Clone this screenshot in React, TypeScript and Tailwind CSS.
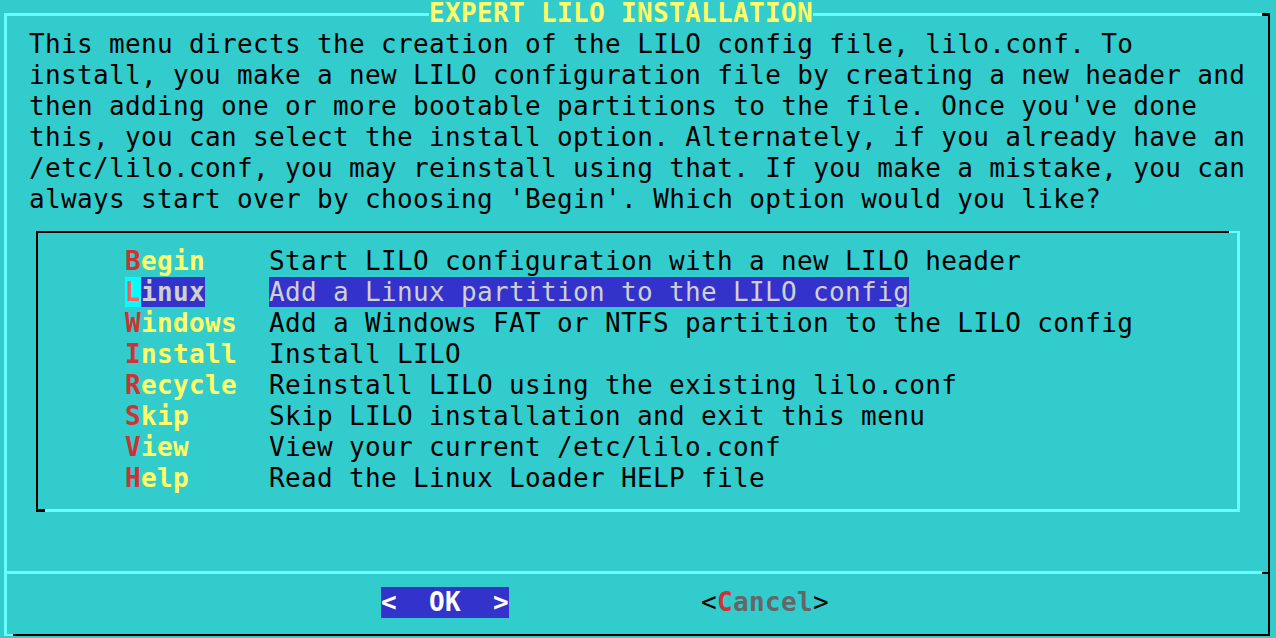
const INTRO = [
  'This menu directs the creation of the LILO config file, lilo.conf. To',
  'install, you make a new LILO configuration file by creating a new header and',
  "then adding one or more bootable partitions to the file. Once you've done",
  'this, you can select the install option. Alternately, if you already have an',
  '/etc/lilo.conf, you may reinstall using that. If you make a mistake, you can',
  "always start over by choosing 'Begin'. Which option would you like?",
];

const ITEMS = [
  { tag: 'Begin',   desc: 'Start LILO configuration with a new LILO header' },
  { tag: 'Linux',   desc: 'Add a Linux partition to the LILO config' },
  { tag: 'Windows', desc: 'Add a Windows FAT or NTFS partition to the LILO config' },
  { tag: 'Install', desc: 'Install LILO' },
  { tag: 'Recycle', desc: 'Reinstall LILO using the existing lilo.conf' },
  { tag: 'Skip',    desc: 'Skip LILO installation and exit this menu' },
  { tag: 'View',    desc: 'View your current /etc/lilo.conf' },
  { tag: 'Help',    desc: 'Read the Linux Loader HELP file' },
];

function MenuRow({ tag, desc, active }: { tag: string; desc: string; active: boolean }) {
  return (
    <div className="flex h-[31px] whitespace-pre">
      <div className="w-[144px] shrink-0 font-bold">
        {active ? (
          <>
            <span className="bg-[#00ffff] text-[#ff5f5f]">{tag[0]}</span>
            <span className="bg-[#3333cc] text-[#d0d0d0]">{tag.slice(1)}</span>
          </>
        ) : (
          <>
            <span className="text-[#cc3333]">{tag[0]}</span>
            <span className="text-[#ffff66]">{tag.slice(1)}</span>
          </>
        )}
      </div>
      <div>
        <span className={active ? 'bg-[#3333cc] text-[#d0d0d0]' : 'text-black'}>{desc}</span>
      </div>
    </div>
  );
}

export default function App() {
  const selected = 1;

  return (
    <div className="w-[1276px] h-[638px] overflow-hidden bg-[#33cccc] pt-[13px] pl-[4px] font-['DejaVu_Sans_Mono',monospace] text-[26px] tracking-[0.35px] leading-[31px] text-black">
      {/* Dialog frame */}
      <div className="relative w-[1266px] h-[623px] border-t-[3px] border-l-[3px] border-r-2 border-b-2 border-t-[#66ffff] border-l-[#66ffff] border-r-black border-b-black">
        <span className="absolute top-[-3px] right-[-2px] w-[8px] h-[3px] bg-black" />
        <span className="absolute bottom-[-2px] left-[-3px] w-[9px] h-[2px] bg-[#66ffff]" />

        {/* Title */}
        <div className="absolute left-[422px] top-[-16px] w-[384px] h-[29px] leading-[27px] bg-[#33cccc] text-[#ffff66] font-bold whitespace-pre">
          EXPERT LILO INSTALLATION
        </div>

        {/* Prompt */}
        <div className="pl-[22px] pt-[13px]">
          {INTRO.map((line) => (
            <div key={line} className="h-[31px] whitespace-pre">{line}</div>
          ))}
        </div>

        {/* Menu box */}
        <div className="relative ml-[29px] mt-[16px] w-[1204px] h-[281px] border-t-2 border-l-2 border-r-[3px] border-b-[3px] border-t-black border-l-black border-r-[#66ffff] border-b-[#66ffff] pt-[13px] pl-[87px]">
          <span className="absolute top-[-2px] right-[-3px] w-[11px] h-[2px] bg-[#66ffff]" />
          <span className="absolute bottom-[-3px] left-[-2px] w-[9px] h-[3px] bg-black" />
          {ITEMS.map((it, i) => (
            <MenuRow key={it.tag} tag={it.tag} desc={it.desc} active={i === selected} />
          ))}
        </div>

        {/* Separator */}
        <div className="mt-[59px] flex h-[3px]">
          <div className="flex-1 bg-[#66ffff]" />
          <div className="w-[6px] h-[2px] mt-[1px] bg-black" />
        </div>

        {/* Buttons */}
        <div className="mt-[13px] flex h-[31px] pl-[374px] whitespace-pre">
          <span className="bg-[#3333cc] text-white font-bold">{'<  OK  >'}</span>
          <span className="ml-[192px]">
            <span className="text-black">{'<'}</span>
            <span className="text-[#cc3333] font-bold">C</span>
            <span className="text-[#666666] font-bold">ancel</span>
            <span className="text-black">{'>'}</span>
          </span>
        </div>
      </div>
    </div>
  );
}
